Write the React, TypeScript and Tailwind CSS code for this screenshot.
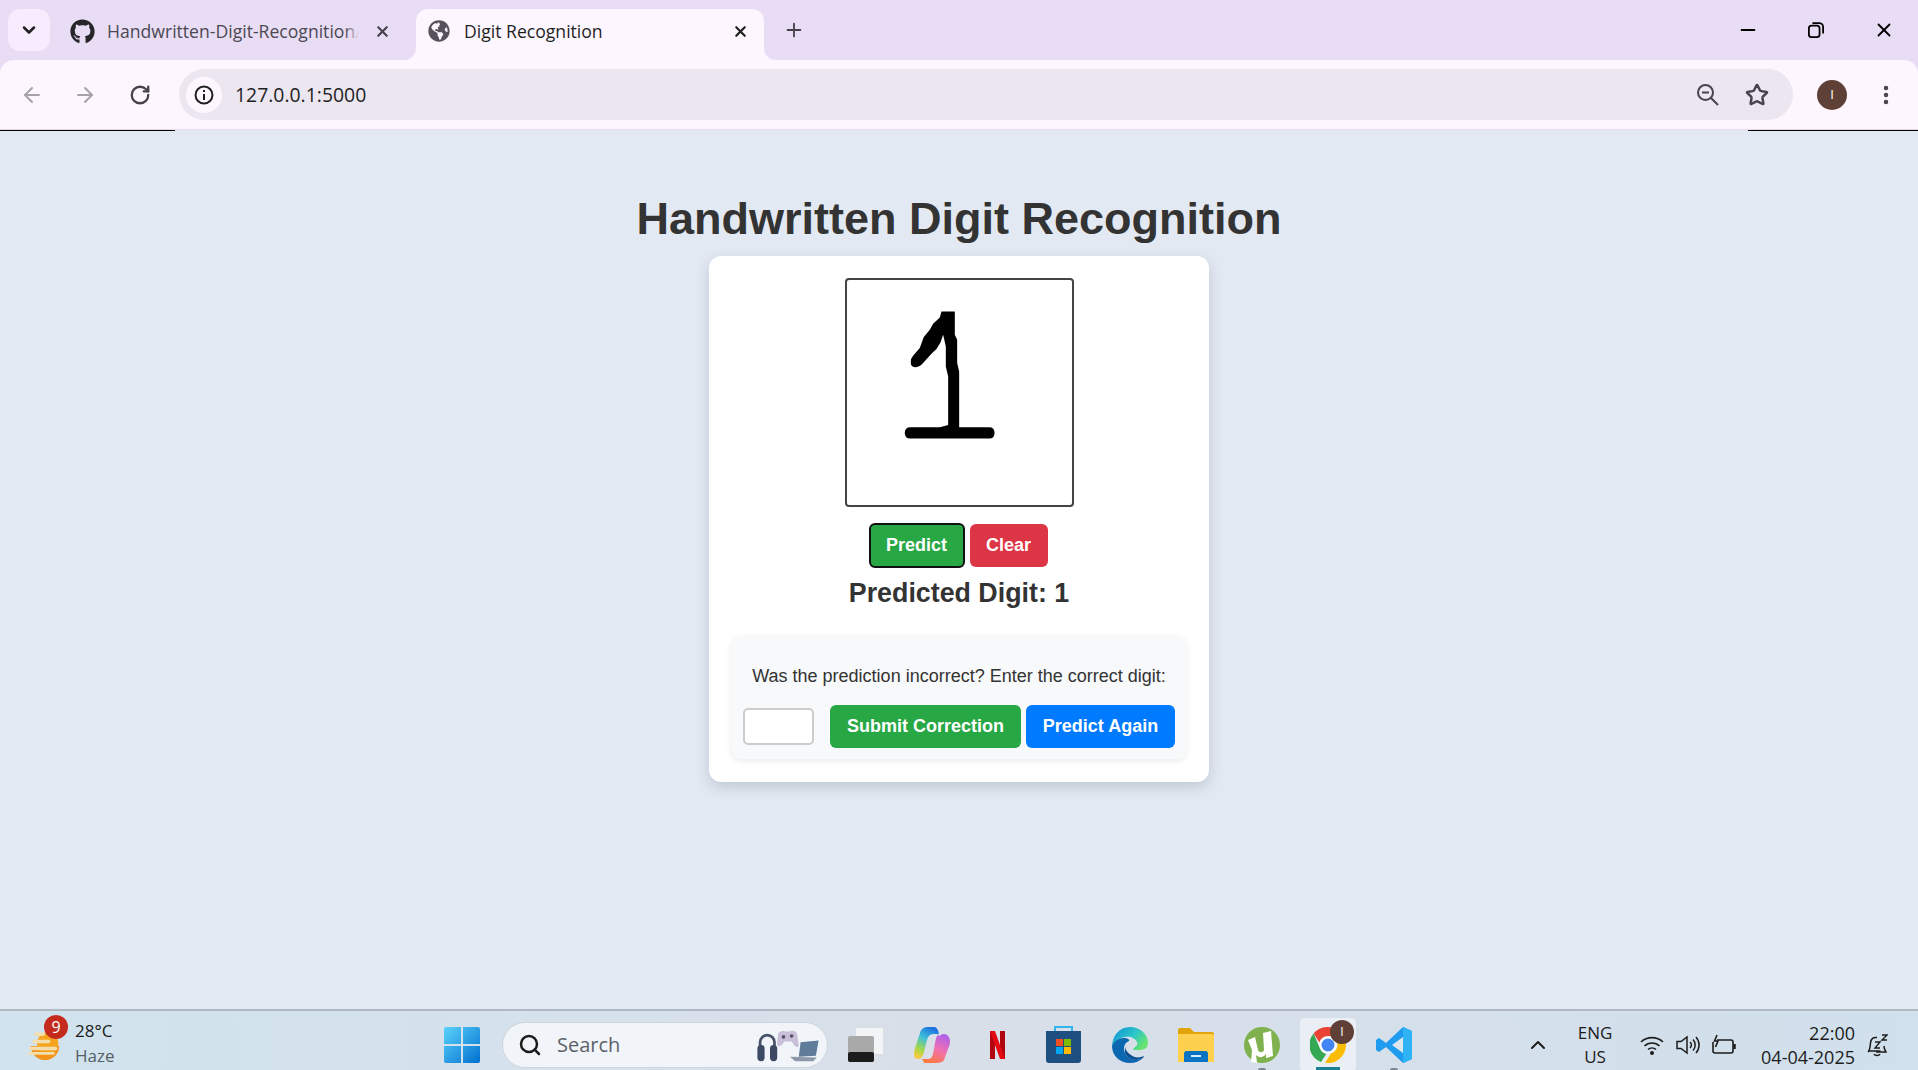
import { ArrowLeft, ArrowRight, ChevronDown, ChevronUp, EllipsisVertical, Minus, Plus, RotateCw, Search, Star, X } from 'lucide-react';
import { FaGithub, FaGlobeAmericas } from 'react-icons/fa';

function TabFoot({ side }: { side: 'left' | 'right' }) {
  return (
    <svg className={`absolute bottom-0 h-3 w-3 ${side === 'left' ? '-left-3' : '-right-3'}`} viewBox="0 0 12 12">
      <path d={side === 'left' ? 'M12 0V12H0A12 12 0 0 0 12 0Z' : 'M0 0V12H12A12 12 0 0 1 0 0Z'} fill="#fef6ff" />
    </svg>
  );
}

function BrowserChrome() {
  return (
    <header className="shrink-0 bg-[#e9ddf5] font-['Open_Sans',sans-serif]">
      <div className="flex h-[60px] items-end pl-2">
        <button className="flex h-[42px] w-[42px] -translate-y-[9px] items-center justify-center rounded-[12px] bg-[#f6ecfd]">
          <ChevronDown className="h-5 w-5 text-[#1f1f1f]" strokeWidth={3} />
        </button>
        <div className="ml-5 flex h-[51px] w-[346px] items-center pb-[7px]">
          <FaGithub className="h-[25px] w-[25px] text-[#26262a]" />
          <span className="relative ml-[12px] w-[252px] overflow-hidden whitespace-nowrap text-[17.6px] text-[#4b4852]">
            Handwritten-Digit-Recognition/
            <span className="absolute inset-y-0 right-0 w-[14px] bg-linear-to-r from-transparent to-[#e9ddf5]" />
          </span>
          <X className="ml-[15px] h-[17px] w-[17px] text-[#45424c]" strokeWidth={3} />
        </div>
        <div className="relative flex h-[51px] w-[348px] items-center rounded-t-[12px] bg-[#fef6ff] pb-[7px] pl-3">
          <TabFoot side="left" />
          <FaGlobeAmericas className="h-[22px] w-[22px] text-[#55525c]" />
          <span className="ml-[14px] w-[263px] text-[17.6px] text-[#1f1f1f]">Digit Recognition</span>
          <X className="ml-[5px] h-[17px] w-[17px] text-[#1f1f1f]" strokeWidth={3} />
          <TabFoot side="right" />
        </div>
        <Plus className="mb-[19px] ml-[19px] h-[22px] w-[22px] text-[#45424c]" strokeWidth={2} />
        <div className="ml-auto flex h-[60px] items-center gap-[47px] pr-[23px] text-black">
          <Minus className="h-[22px] w-[22px]" strokeWidth={2} />
          <svg className="mx-[2px] h-[16px] w-[16px]" viewBox="0 0 18 18" fill="none" stroke="currentColor" strokeWidth="2">
            <rect x="1" y="4" width="12" height="13" rx="3" />
            <path d="M5 1.2h7.5a4.5 4.5 0 0 1 4.5 4.5V13" />
          </svg>
          <X className="h-[22px] w-[22px]" strokeWidth={2} />
        </div>
      </div>
      <div className="flex h-[70px] items-center rounded-t-[14px] border-b border-[#e6dcec] bg-[#fef6ff] pl-[20px]">
        <ArrowLeft className="h-[24px] w-[24px] text-[#a5a2ab]" strokeWidth={2} />
        <ArrowRight className="ml-[29px] h-[24px] w-[24px] text-[#a5a2ab]" strokeWidth={2} />
        <RotateCw className="ml-[32px] h-[22px] w-[22px] text-[#46434c]" strokeWidth={2.5} />
        <div className="ml-[28px] flex h-[51px] w-[1614px] items-center rounded-full bg-[#ebe6f0] pl-[7px] pr-[24px]">
          <span className="flex h-[36px] w-[36px] items-center justify-center rounded-full bg-[#fef6ff]">
            <svg className="h-[20px] w-[20px]" viewBox="0 0 20 20" fill="none" stroke="#1f1f1f" strokeWidth="2">
              <circle cx="10" cy="10" r="8.5" />
              <path d="M10 9v6M10 5v2" />
            </svg>
          </span>
          <span className="ml-[13px] text-[19.4px] text-[#1f1f1f]">127.0.0.1:5000</span>
          <svg className="ml-auto h-[22px] w-[22px]" viewBox="0 0 22 22" fill="none" stroke="#47444d" strokeWidth="2">
            <circle cx="8.500" cy="8.500" r="7.500" />
            <path d="M5 8.500h7M14 14l7 7" />
          </svg>
          <Star className="ml-[26px] h-[24px] w-[24px] text-[#47444d]" strokeWidth={2.5} />
        </div>
        <span className="ml-[24px] flex h-[30px] w-[30px] items-center justify-center rounded-full bg-[#5f4036] text-[13px] text-white">I</span>
        <EllipsisVertical className="ml-[27px] h-[24px] w-[24px] text-[#47444d]" strokeWidth={2.5} />
      </div>
      <div className="flex h-[1px] justify-between bg-[#e2e8f1]">
        <div className="w-[175px] bg-black" />
        <div className="w-[170px] bg-black" />
      </div>
    </header>
  );
}

function DigitCanvas() {
  return (
    <div className="h-[229px] w-[229px] rounded-[4px] border-2 border-[#444444] bg-white">
      {/* same hand drawn stroke as the canvas, traced */}
      <svg className="h-full w-full" viewBox="442 91 674 674">
        <path
          fill="#000"
          d="M725 185H765V255L772 270V340L778 365V532H868Q884 532 884 549Q884 566 868 566H632Q615 566 615 549Q615 532 632 532H720L745 525V380L738 350V290L730 255L722 278L710 298L695 312L670 340Q660 352 648 352Q633 352 633 338Q633 325 640 318L660 295L672 262L690 240L700 222L720 203Z"
        />
      </svg>
    </div>
  );
}

function Card() {
  return (
    <div className="flex h-[526px] w-[500px] flex-col items-center rounded-[12px] bg-white pt-[22px] shadow-[0_5px_14px_rgba(30,50,80,0.18)]">
      <DigitCanvas />
      <div className="mt-4 flex items-center gap-[5px] pr-[2px] text-[18px] font-bold text-white">
        <button className="h-[45px] w-[96px] rounded-[6px] border-2 border-[#111] bg-[#28a745]">Predict</button>
        <button className="h-[43px] w-[78px] rounded-[6px] bg-[#dc3545]">Clear</button>
      </div>
      <h2 className="mt-[9px] text-[26.8px] leading-[32px] font-bold text-[#333]">Predicted Digit: 1</h2>
      <div className="mt-[27px] h-[123px] w-[456px] rounded-[10px] bg-[#f8f9fa] pt-[29px] shadow-[0_2px_6px_rgba(0,0,0,0.08)]">
        <p className="text-center text-[18px] leading-[22px] text-[#333]">Was the prediction incorrect? Enter the correct digit:</p>
        <div className="mt-[18px] flex items-center pl-[12px]">
          <input className="h-[37px] w-[71px] rounded-[5px] border-2 border-[#cccccc] bg-white" />
          <button className="ml-[16px] h-[43px] w-[191px] rounded-[6px] bg-[#28a745] text-[18px] font-bold text-white">Submit Correction</button>
          <button className="ml-[5px] h-[43px] w-[149px] rounded-[6px] bg-[#007bff] text-[18px] font-bold text-white">Predict Again</button>
        </div>
      </div>
    </div>
  );
}

function WeatherIcon() {
  return (
    <svg className="h-[32px] w-[36px]" viewBox="0 0 38 36">
      <path d="M3 19h32a16 16 0 0 1-32 0Z" fill="#f39318" />
      <circle cx="22" cy="16" r="12" fill="#f7a51f" />
      <g fill="#f3dfae">
        <rect x="7" y="4" width="12" height="4" rx="2" />
        <rect x="5" y="12" width="20" height="4" rx="2" />
        <rect x="1" y="20" width="32" height="4" rx="2" />
        <rect x="0" y="26" width="30" height="3" rx="1.500" />
      </g>
    </svg>
  );
}

function WindowsLogo() {
  return (
    <svg className="h-[36px] w-[36px]" viewBox="0 0 36 36">
      <defs>
        <linearGradient id="win" x1="0" y1="0" x2="1" y2="1">
          <stop offset="0" stopColor="#5cd2fb" />
          <stop offset="1" stopColor="#0070cf" />
        </linearGradient>
      </defs>
      <path fill="url(#win)" d="M0 2a2 2 0 0 1 2-2H17V17H0ZM19 0H34a2 2 0 0 1 2 2V17H19ZM0 19H17V36H2a2 2 0 0 1-2-2ZM19 19H36V34a2 2 0 0 1-2 2H19Z" />
    </svg>
  );
}

function SearchArt() {
  return (
    <svg className="h-[36px] w-[72px]" viewBox="0 0 72 40">
      <path d="M5 24V17a8 8 0 0 1 16 0v7" fill="none" stroke="#48536a" strokeWidth="3" />
      <rect x="2" y="20" width="8" height="18" rx="4" fill="#3d4963" />
      <rect x="16" y="20" width="8" height="18" rx="4" fill="#3d4963" />
      <path d="M25 7c4-4 6-2 10-2s7-3 11 2l2 14c0 2-4 2-6-2l-2-3h-8l-3 4c-3 2-6 1-5-2Z" fill="#c9c0d8" />
      <circle cx="31" cy="11" r="2" fill="#56506a" />
      <circle cx="40" cy="10" r="2" fill="#56506a" />
      <path d="M50 17l20-2-3 17-19 1Z" fill="#5f7c9a" />
      <path d="M38 33l30 1-4 4H44Z" fill="#8c98aa" />
    </svg>
  );
}

function TaskView() {
  return (
    <svg className="h-[34px] w-[35px]" viewBox="0 0 35 34">
      <rect x="8" y="0" width="27" height="26" fill="#f3f4f6" />
      <rect x="0" y="8" width="26" height="26" rx="2" fill="#a9a9a9" />
      <rect x="0" y="24" width="26" height="10" rx="2" fill="#1b1b1b" />
    </svg>
  );
}

function Copilot() {
  return (
    <svg className="h-[36px] w-[36px]" viewBox="0 0 36 36">
      <defs>
        <linearGradient id="copA" x1="0.7" y1="0" x2="0.3" y2="1">
          <stop offset="0" stopColor="#1a6fe0" />
          <stop offset="0.4" stopColor="#3fc0d8" />
          <stop offset="0.75" stopColor="#a4d84c" />
          <stop offset="1" stopColor="#f6c93c" />
        </linearGradient>
        <linearGradient id="copB" x1="0.7" y1="0" x2="0.3" y2="1">
          <stop offset="0" stopColor="#b060e8" />
          <stop offset="0.5" stopColor="#f070b0" />
          <stop offset="1" stopColor="#fb7a3c" />
        </linearGradient>
      </defs>
      <path d="M24 7c2 6 5 8 8 8-3 0-5 3-7 9-2 7-5 12-11 12H9l5-2c4-2 5-6 6-12 1-7 2-12 4-15Z" fill="url(#copB)" />
      <path d="M14 0h6c3 0 4 3 5 7H19c-3 0-5 2-6 6l-3 12c-1 4-3 7-6 7-3 0-4-3-4-6 0-2 1-5 2-8l4-12c1-4 4-6 8-6Z" fill="url(#copA)" />
      <path d="M22 36h-9c-3 0-4-2-5-4h6c3 0 5-2 6-6l3-12c1-4 3-7 7-7 3 0 6 3 6 7 0 3-1 6-2 8l-4 11c-1 2-4 3-8 3Z" fill="url(#copB)" />
    </svg>
  );
}

function Netflix() {
  return (
    <svg className="h-[28px] w-[15px]" viewBox="0 0 15 28">
      <path d="M0 0H5V28L0 28Z" fill="#b1060f" />
      <path d="M10 0H15V28H10Z" fill="#b1060f" />
      <path d="M0 0H5L15 28H10Z" fill="#e50914" />
    </svg>
  );
}

function Store() {
  return (
    <svg className="h-[38px] w-[35px]" viewBox="0 0 35 38">
      <path d="M9 6V1H26V6" fill="none" stroke="#32b5ea" strokeWidth="2" />
      <path d="M0 5H35V34a3 3 0 0 1-3 3H3a3 3 0 0 1-3-3Z" fill="#1d4f80" />
      <rect x="10" y="13" width="7" height="7" fill="#f25022" />
      <rect x="18" y="13" width="7" height="7" fill="#7fba00" />
      <rect x="10" y="21" width="7" height="7" fill="#00a4ef" />
      <rect x="18" y="21" width="7" height="7" fill="#ffb900" />
    </svg>
  );
}

function Edge() {
  return (
    <svg className="h-[36px] w-[36px]" viewBox="0 0 36 36">
      <defs>
        <linearGradient id="edge" x1="0" y1="0" x2="1" y2="0.6">
          <stop offset="0" stopColor="#0f8fd6" />
          <stop offset="0.6" stopColor="#2cc7c9" />
          <stop offset="1" stopColor="#67e36e" />
        </linearGradient>
      </defs>
      <path d="M18 0c10 0 18 7 18 16 0 5-4 7-8 7h-7c0-1 1-2 2-3 2-1 3-3 2-5-2-4-7-6-12-5C7 11 2 15 0 20 0 9 7 0 18 0Z" fill="url(#edge)" />
      <path d="M0 19c2-5 7-8 12-8 4 0 6 2 5 3-5 2-6 7-4 12 2 4 6 7 11 7 2 0 5-1 7-2-3 3-8 5-13 5C8 36 0 29 0 19Z" fill="#0b67b0" />
      <path d="M13 26c2 4 6 7 11 7 2 0 5-1 7-2l1-2c-4 2-10 2-13-1-3-2-5-4-6-8Z" fill="#0a4f91" />
    </svg>
  );
}

function Explorer() {
  return (
    <svg className="h-[34px] w-[36px]" viewBox="0 0 36 34">
      <path d="M0 2a2 2 0 0 1 2-2H12L16 4H34a2 2 0 0 1 2 2V12H0Z" fill="#e2a40a" />
      <path d="M0 6H34a2 2 0 0 1 2 2V34H0Z" fill="#fdd04f" />
      <path d="M6 26a3 3 0 0 1 3-3H27a3 3 0 0 1 3 3V34H6Z" fill="#0a73c4" />
      <rect x="13" y="27" width="10" height="2" fill="#d4ecff" />
    </svg>
  );
}

function UTorrent() {
  return (
    <svg className="h-[36px] w-[36px]" viewBox="0 0 36 36">
      <circle cx="18" cy="18" r="18" fill="#7fb24f" />
      <path d="M4 13l7-3 3 13c1 3 5 3 6 0L19 6l8-2 2 25-7 2v-4c-3 4-7 4-10 1l1 8-6-1 1-12Z" fill="#fff" />
    </svg>
  );
}

function Chrome() {
  return (
    <svg className="h-[36px] w-[36px]" viewBox="0 0 36 36">
      <path d="M18 0a18 18 0 0 1 15.600 9H18a9 9 0 0 0-8.600 6.500L3.600 6.500A18 18 0 0 1 18 0Z" fill="#ea4335" />
      <path d="M3.600 6.500l6.500 15.500a9 9 0 0 0 6.200 5L11 35A18 18 0 0 1 3.600 6.500Z" fill="#34a853" />
      <path d="M33.600 9A18 18 0 0 1 15 35.800l6-9.200A9 9 0 0 0 26 13Z" fill="#fbbc04" />
      <circle cx="18" cy="18" r="8.500" fill="#fff" />
      <circle cx="18" cy="18" r="6.500" fill="#4285f4" />
    </svg>
  );
}

function VSCode() {
  return (
    <svg className="h-[36px] w-[36px]" viewBox="0 0 36 36">
      <path d="M27 0L36 4V32L27 36L10 20L3 25L0 23V13L3 11L10 16Z" fill="#1f9cf0" />
      <path d="M27 0V36L36 32V4Z" fill="#2eb3f5" />
      <path d="M27 10L16 18L27 26Z" fill="#dbe5ee" />
    </svg>
  );
}

function Taskbar() {
  return (
    <footer className="relative flex h-[61px] shrink-0 items-center overflow-hidden border-t-2 border-[#b0b8c4] bg-linear-to-r from-[#d0e3ee] via-[#d9dfe9] to-[#d0e0ec] pt-[8px] font-['Open_Sans',sans-serif] text-[#1c1c1c]">
      <div className="relative ml-[27px] flex w-[417px] items-center">
        <WeatherIcon />
        <span className="absolute -top-[6px] left-[17px] flex h-[24px] w-[24px] items-center justify-center rounded-full bg-[#c42b1c] text-[16px] text-white">9</span>
        <div className="ml-[12px] -mt-[3px] flex flex-col text-[17px] leading-[25px]">
          <span>28°C</span>
          <span className="text-[#555d66]">Haze</span>
        </div>
      </div>
      <WindowsLogo />
      <div className="ml-[22px] flex h-[46px] w-[326px] items-center rounded-full border border-[#cdd5de] bg-[#f1f5f9] pl-[15px]">
        <Search className="h-[24px] w-[24px] text-[#1c1c1c]" strokeWidth={2.5} />
        <span className="ml-[15px] text-[20px] text-[#5c6168]">Search</span>
        <span className="ml-auto mr-[3px]"><SearchArt /></span>
      </div>
      <div className="ml-[20px] flex items-center">
        <TaskView />
        <span className="ml-[31px]"><Copilot /></span>
        <span className="ml-[40px]"><Netflix /></span>
        <span className="ml-[41px]"><Store /></span>
        <span className="ml-[31px]"><Edge /></span>
        <span className="ml-[30px]"><Explorer /></span>
        <span className="ml-[30px]"><UTorrent /></span>
        <div className="relative ml-[20px] flex h-[54px] w-[56px] items-center justify-center rounded-[5px] bg-[#e9eff5]">
          <Chrome />
          <span className="absolute right-[2px] top-[2px] flex h-[24px] w-[24px] items-center justify-center rounded-full bg-[#5f4036] text-[12px] text-white">I</span>
        </div>
        <span className="ml-[20px]"><VSCode /></span>
      </div>
      {/* running-app markers along the bottom edge */}
      <span className="absolute bottom-0 left-[1258px] h-[2px] w-[8px] rounded-t-full bg-[#7b8794]" />
      <span className="absolute bottom-0 left-[1316px] h-[3px] w-[24px] bg-[#1d7f93]" />
      <span className="absolute bottom-0 left-[1390px] h-[2px] w-[8px] rounded-t-full bg-[#7b8794]" />
      <ChevronUp className="ml-[114px] h-[24px] w-[24px] text-[#1c1c1c]" strokeWidth={2} />
      <div className="ml-[28px] flex w-[34px] flex-col items-center text-[17px] leading-[24px]">
        <span>ENG</span>
        <span>US</span>
      </div>
      <svg className="ml-[28px] h-[20px] w-[24px]" viewBox="0 0 24 20" fill="none" stroke="#1c1c1c" strokeWidth="1.600">
        <path d="M1 7a16 16 0 0 1 22 0M4.500 11a11 11 0 0 1 15 0M8 14.500a6 6 0 0 1 8 0" />
        <circle cx="12" cy="18" r="1.200" fill="#1c1c1c" />
      </svg>
      <svg className="ml-[12px] h-[22px] w-[24px]" viewBox="0 0 24 22" fill="none" stroke="#1c1c1c" strokeWidth="1.500">
        <path d="M1 7.500h4L11 3V19L5 14.500H1Z" />
        <path d="M14 8a4 4 0 0 1 0 6M17 5.500a8 8 0 0 1 0 11M20 3a12 12 0 0 1 0 16" />
      </svg>
      <svg className="ml-[12px] h-[22px] w-[24px]" viewBox="0 0 24 22" fill="none" stroke="#1c1c1c" strokeWidth="1.600">
        <path d="M5 6h14a2 2 0 0 1 2 2v9a2 2 0 0 1-2 2H3a2 2 0 0 1-2-2V8" />
        <path d="M22.500 10v5" strokeWidth="2.500" />
        <path d="M5 1L2.500 7H6L3.500 13" />
      </svg>
      <div className="ml-[18px] flex w-[101px] flex-col items-end text-[18px] leading-[24px]">
        <span>22:00</span>
        <span className="whitespace-nowrap">04-04-2025</span>
      </div>
      <svg className="ml-[11px] h-[24px] w-[22px]" viewBox="0 0 22 24" fill="none" stroke="#1c1c1c" strokeWidth="1.500">
        <path d="M2 19c2-2 2-4 2.500-9S8 4 11 4.500M14.500 18H2M18 13c0 3 1 4 2 6H10" />
        <path d="M8 21c1 2 5 2 6 0" />
        <path d="M9 9h5l-5 6h5M16 2h5l-5 5h5" strokeWidth="1.400" />
      </svg>
    </footer>
  );
}

export default function App() {
  return (
    <div className="flex h-[1070px] w-[1918px] flex-col overflow-hidden bg-[#e3e9f2] font-['Liberation_Sans',Arial,sans-serif]">
      <BrowserChrome />
      <main className="flex flex-1 flex-col items-center pt-[62px]">
        <h1 className="mb-[11px] text-[45px] leading-[52px] font-bold text-[#333]">Handwritten Digit Recognition</h1>
        <Card />
      </main>
      <Taskbar />
    </div>
  );
}
